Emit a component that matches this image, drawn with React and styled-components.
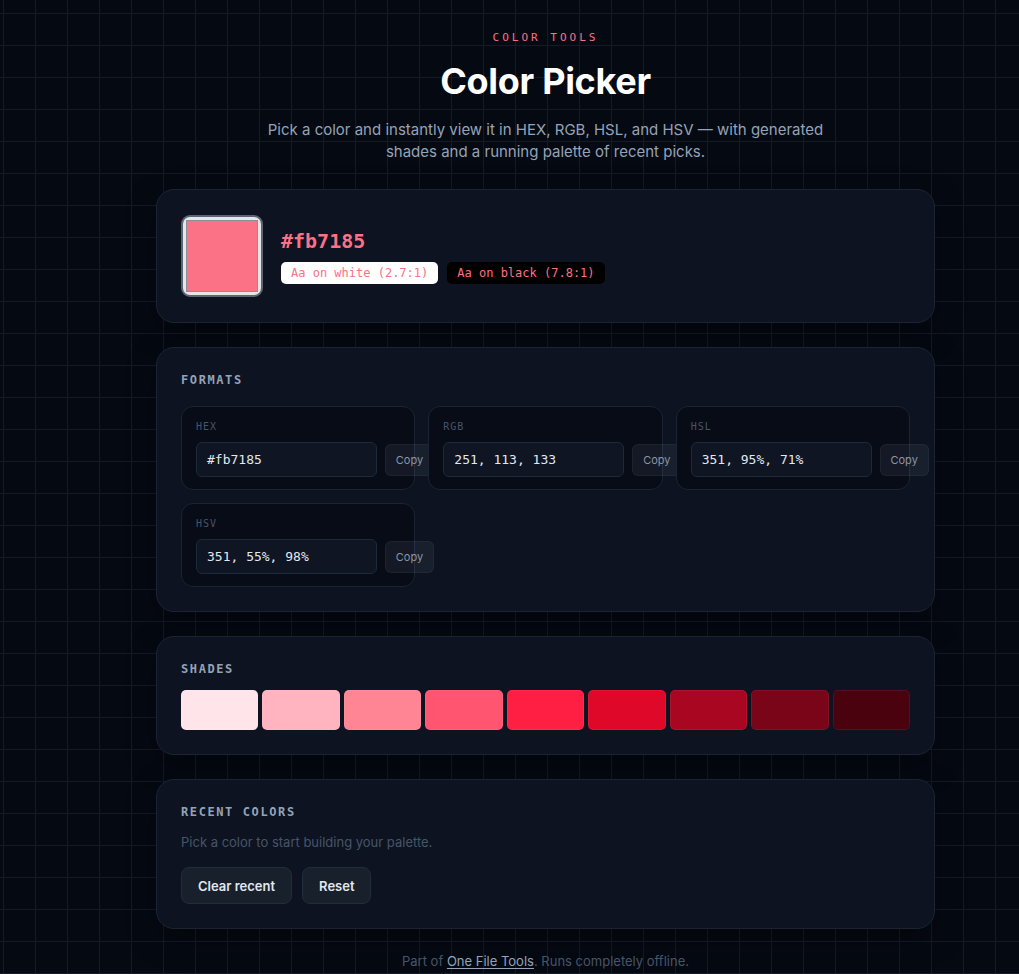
import styled, { createGlobalStyle } from 'styled-components';

const GlobalStyle = createGlobalStyle`
  html, body {
    margin: 0;
    padding: 0;
  }
  body {
    background-color: #050912;
    background-image:
      linear-gradient(to right, #141a26 1px, transparent 1px),
      linear-gradient(to bottom, #141a26 1px, transparent 1px);
    background-size: 32px 32px;
    background-position: 3px 13px;
    color: #e2e8f0;
    font-family: Inter, "Noto Sans", sans-serif;
  }
`;

const mono = `"DejaVu Sans Mono", "Liberation Mono", monospace`;

const formats = [
  { label: 'HEX', value: '#fb7185' },
  { label: 'RGB', value: '251, 113, 133' },
  { label: 'HSL', value: '351, 95%, 71%' },
  { label: 'HSV', value: '351, 55%, 98%' },
];

const shades = [
  '#ffe5e9',
  '#ffb4c0',
  '#ff8595',
  '#ff5570',
  '#fe1f43',
  '#df0829',
  '#a80621',
  '#7a0418',
  '#4a020e',
];

function App() {
  return (
    <Page>
      <GlobalStyle />
      <Main>
        <Header>
          <Eyebrow>COLOR TOOLS</Eyebrow>
          <Title>Color Picker</Title>
          <Lead>
            Pick a color and instantly view it in HEX, RGB, HSL, and HSV — with generated
            shades and a running palette of recent picks.
          </Lead>
        </Header>

        <Card>
          <PickerRow>
            <Swatch>
              <SwatchFill />
            </Swatch>
            <PickerInfo>
              <HexText>#fb7185</HexText>
              <Badges>
                <Badge $light>Aa on white (2.7:1)</Badge>
                <Badge>Aa on black (7.8:1)</Badge>
              </Badges>
            </PickerInfo>
          </PickerRow>
        </Card>

        <Card>
          <SectionTitle>FORMATS</SectionTitle>
          <FormatGrid>
            {formats.map((f) => (
              <FormatBox key={f.label}>
                <FormatLabel>{f.label}</FormatLabel>
                <FormatRow>
                  <ValueField>{f.value}</ValueField>
                  <CopyButton>Copy</CopyButton>
                </FormatRow>
              </FormatBox>
            ))}
          </FormatGrid>
        </Card>

        <Card>
          <SectionTitle>SHADES</SectionTitle>
          <ShadeRow>
            {shades.map((c) => (
              <Shade key={c} $color={c} />
            ))}
          </ShadeRow>
        </Card>

        <Card>
          <SectionTitle>RECENT COLORS</SectionTitle>
          <Muted>Pick a color to start building your palette.</Muted>
          <Actions>
            <ActionButton>Clear recent</ActionButton>
            <ActionButton>Reset</ActionButton>
          </Actions>
        </Card>

        <Footer>
          Part of <FooterLink href="#">One File Tools</FooterLink>. Runs completely offline.
        </Footer>
      </Main>
    </Page>
  );
}

export default App;

const Page = styled.div`
  min-height: 100vh;
  padding: 0 0 40px 72px;
  box-sizing: border-box;
`;

const Main = styled.main`
  max-width: 779px;
  margin: 0 auto;
  display: flex;
  flex-direction: column;
  gap: 24px;
`;

const Header = styled.header`
  display: flex;
  flex-direction: column;
  align-items: center;
  text-align: center;
  padding-top: 31px;
  margin-bottom: 2px;
`;

const Eyebrow = styled.div`
  font-family: ${mono};
  font-size: 11px;
  letter-spacing: 3px;
  color: #fb7185;
  line-height: 14px;
`;

const Title = styled.h1`
  margin: 14px 0 0;
  font-size: 36px;
  font-weight: 700;
  color: #ffffff;
  line-height: 44px;
  letter-spacing: -0.3px;
`;

const Lead = styled.p`
  margin: 16px 0 0;
  max-width: 570px;
  font-size: 15px;
  line-height: 22px;
  color: #94a3b8;
`;

const Card = styled.section`
  background: #0d1320;
  border: 1px solid #1c2433;
  border-radius: 18px;
  padding: 24px;
  box-shadow: 0 10px 30px rgba(0, 0, 0, 0.35);
`;

const PickerRow = styled.div`
  display: flex;
  align-items: center;
  gap: 18px;
  padding: 1px 0;
`;

const Swatch = styled.div`
  width: 82px;
  height: 82px;
  box-sizing: border-box;
  border: 2px solid #5f6470;
  border-radius: 9px;
  background: #e6e6e9;
  padding: 3px;
`;

const SwatchFill = styled.div`
  width: 100%;
  height: 100%;
  background: #fb7185;
  border: 1px solid #8b8f99;
  box-sizing: border-box;
`;

const PickerInfo = styled.div`
  display: flex;
  flex-direction: column;
  gap: 8px;
`;

const HexText = styled.div`
  font-family: ${mono};
  font-size: 20px;
  font-weight: 700;
  color: #fb7185;
  line-height: 26px;
`;

const Badges = styled.div`
  display: flex;
  gap: 9px;
`;

const Badge = styled.span`
  display: block;
  font-family: ${mono};
  font-size: 12px;
  line-height: 22px;
  height: 22px;
  padding: 0 10px;
  border-radius: 5px;
  color: #fb7185;
  background: ${(p) => (p.$light ? '#ffffff' : '#000000')};
`;

const SectionTitle = styled.h2`
  margin: 0 0 18px;
  font-family: ${mono};
  font-size: 12px;
  font-weight: 700;
  letter-spacing: 1.6px;
  color: #94a3b8;
  line-height: 16px;
`;

const FormatGrid = styled.div`
  display: grid;
  grid-template-columns: repeat(3, 1fr);
  gap: 13px;
`;

const FormatBox = styled.div`
  background: #080c16;
  border: 1px solid #1c2433;
  border-radius: 12px;
  padding: 13px 14px 12px;
  min-width: 0;
`;

const FormatLabel = styled.div`
  font-family: ${mono};
  font-size: 10px;
  letter-spacing: 1px;
  color: #475569;
  line-height: 14px;
  margin-bottom: 8px;
`;

const FormatRow = styled.div`
  display: flex;
  align-items: center;
  gap: 8px;
  margin-right: -34px;
`;

const ValueField = styled.div`
  flex: 0 0 181px;
  box-sizing: border-box;
  height: 35px;
  display: flex;
  align-items: center;
  padding: 0 10px;
  background: #0f1522;
  border: 1px solid #1e293b;
  border-radius: 6px;
  font-family: ${mono};
  font-size: 13px;
  color: #e2e8f0;
`;

const CopyButton = styled.button`
  flex: 0 0 49px;
  height: 32px;
  padding: 0;
  border-radius: 6px;
  border: 1px solid rgba(148, 163, 184, 0.08);
  background: rgba(148, 163, 184, 0.09);
  color: #8b95a5;
  font-family: Inter, sans-serif;
  font-size: 11px;
`;

const ShadeRow = styled.div`
  display: grid;
  grid-template-columns: repeat(9, 1fr);
  gap: 4px;
  margin-top: -5px;
`;

const Shade = styled.div`
  height: 40px;
  border-radius: 5px;
  background: ${(p) => p.$color};
  box-shadow: inset 0 0 0 1px rgba(255, 255, 255, 0.06);
`;

const Muted = styled.p`
  margin: -5px 0 16px;
  font-size: 13px;
  color: #475569;
  line-height: 18px;
`;

const Actions = styled.div`
  display: flex;
  gap: 10px;
`;

const ActionButton = styled.button`
  height: 37px;
  padding: 0 16px;
  border-radius: 8px;
  border: 1px solid #222c3a;
  background: #18202c;
  color: #e2e8f0;
  font-family: Inter, sans-serif;
  font-size: 13px;
  font-weight: 600;
`;

const Footer = styled.footer`
  text-align: center;
  font-size: 13px;
  color: #475569;
  margin-top: 0;
`;

const FooterLink = styled.a`
  color: #94a3b8;
  text-decoration: underline;
  text-underline-offset: 2px;
`;
